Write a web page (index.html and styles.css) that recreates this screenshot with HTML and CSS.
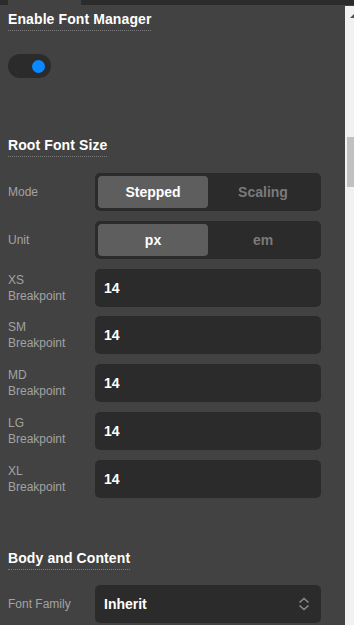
FILE: index.html
```html
<!DOCTYPE html>
<html lang="en">
<head>
  <meta charset="UTF-8" />
  <meta name="viewport" content="width=device-width, initial-scale=1.0"/>
  <title>Font Manager</title>
  <link rel="stylesheet" href="styles.css">
</head>
<body>
  <div class="topbar">
    <span class="topbar-edge"></span>
    <span class="topbar-tab"></span>
    <span class="topbar-rest"></span>
  </div>

  <div class="frame">
    <div class="panel">
      <h2 class="heading">Enable Font Manager</h2>
      <div class="toggle on"><span class="knob"></span></div>

      <h2 class="heading heading-root">Root Font Size</h2>

      <div class="rows">
        <div class="row">
          <label class="label">Mode</label>
          <div class="segmented">
            <button class="seg active">Stepped</button>
            <button class="seg">Scaling</button>
          </div>
        </div>
        <div class="row">
          <label class="label">Unit</label>
          <div class="segmented">
            <button class="seg active">px</button>
            <button class="seg">em</button>
          </div>
        </div>
        <div class="row">
          <label class="label">XS Breakpoint</label>
          <div class="input">14</div>
        </div>
        <div class="row">
          <label class="label">SM Breakpoint</label>
          <div class="input">14</div>
        </div>
        <div class="row">
          <label class="label">MD Breakpoint</label>
          <div class="input">14</div>
        </div>
        <div class="row">
          <label class="label">LG Breakpoint</label>
          <div class="input">14</div>
        </div>
        <div class="row">
          <label class="label">XL Breakpoint</label>
          <div class="input">14</div>
        </div>
      </div>

      <h2 class="heading heading-body">Body and Content</h2>

      <div class="row">
        <label class="label">Font Family</label>
        <div class="input select">
          Inherit
          <svg class="chevrons" width="12" height="14" viewBox="0 0 12 14" fill="none" stroke="#8a8a8a" stroke-width="1.6">
            <path d="M1.5 5.5 L6 1.5 L10.5 5.5" />
            <path d="M1.5 8.5 L6 12.5 L10.5 8.5" />
          </svg>
        </div>
      </div>
    </div>

    <!-- fake scrollbar -->
    <div class="scrollbar">
      <span class="scroll-arrow"></span>
      <span class="scroll-thumb"></span>
    </div>
  </div>
</body>
</html>
```

FILE: styles.css
```css
* {
  margin: 0;
  padding: 0;
  box-sizing: border-box;
  font-family: 'Liberation Sans', Arial, sans-serif;
}

body {
  width: 354px;
  height: 625px;
  overflow: hidden;
  background: #424242;
  color: #fff;
  display: flex;
  flex-direction: column;
}

.topbar {
  display: flex;
  height: 5px;
  flex-shrink: 0;
}

.topbar-edge {
  width: 8px;
  background: #2b2b2b;
}

.topbar-tab {
  width: 73px;
  background: #424242;
}

.topbar-rest {
  flex: 1;
  background: #2b2b2b;
}

.frame {
  flex: 1;
  display: flex;
  min-height: 0;
}

.panel {
  flex: 1;
  padding: 6px 24px 0 8px;
  display: flex;
  flex-direction: column;
  align-items: flex-start;
}

.heading {
  font-size: 14px;
  line-height: 17px;
  font-weight: 700;
  letter-spacing: 0.1px;
  padding-bottom: 2px;
  border-bottom: 1px dotted #7a7a7a;
}

.heading-root {
  margin-top: 59px;
}

.heading-body {
  margin-top: 52px;
}

.toggle {
  margin-top: 23px;
  width: 43px;
  height: 24px;
  border-radius: 12px;
  background: #2b2b2b;
  display: flex;
  align-items: center;
  justify-content: flex-end;
  padding-right: 6px;
}

.knob {
  width: 13px;
  height: 13px;
  border-radius: 50%;
  background: #0a88ff;
}

.rows {
  margin-top: 16px;
  width: 100%;
  display: flex;
  flex-direction: column;
  gap: 9.75px;
}

.heading-body + .row {
  margin-top: 15px;
}

.row {
  width: 100%;
  display: flex;
  align-items: center;
  height: 38px;
}

.label {
  width: 72px;
  margin-right: 15px;
  font-size: 12px;
  line-height: 16px;
  color: #a2a2a2;
}

.segmented {
  flex: 1;
  height: 38px;
  background: #2b2b2b;
  border-radius: 5px;
  padding: 3px;
  display: flex;
}

.seg {
  flex: 1;
  border: none;
  border-radius: 4px;
  background: transparent;
  color: #7a7a7a;
  font-size: 14px;
  font-weight: 700;
}

.seg.active {
  background: #5e5e5e;
  color: #fff;
}

.input {
  flex: 1;
  height: 38px;
  background: #2b2b2b;
  border-radius: 5px;
  padding: 0 9px;
  display: flex;
  align-items: center;
  font-size: 14px;
  font-weight: 700;
  color: #fff;
}

.select {
  justify-content: space-between;
  padding-right: 11px;
}

.scrollbar {
  width: 9px;
  margin-top: 1px;
  background: #f1f1f1;
  display: flex;
  flex-direction: column;
  align-items: flex-end;
}

.scroll-arrow {
  margin-top: 8px;
  width: 0;
  height: 0;
  border-left: 4px solid transparent;
  border-bottom: 4px solid #505050;
}

.scroll-thumb {
  margin-top: 119px;
  width: 7px;
  height: 50px;
  background: #c1c1c1;
}
```
